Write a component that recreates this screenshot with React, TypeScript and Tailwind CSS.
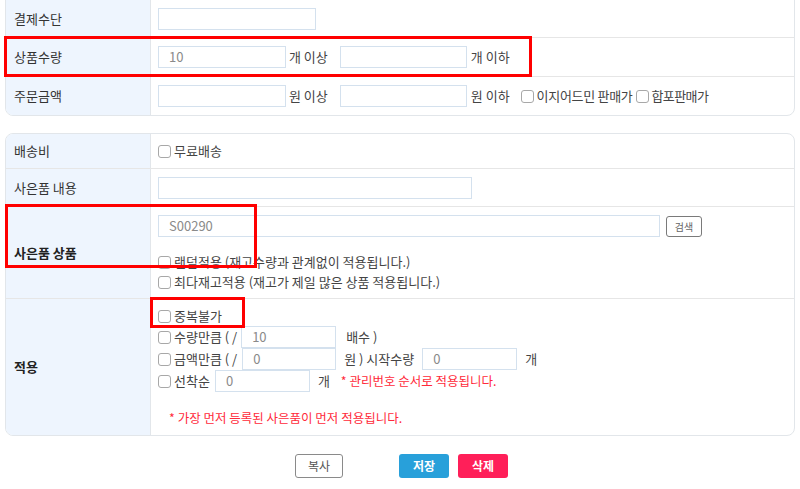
import React from "react";

const Cb = () => (
  <span className="inline-block w-[13px] h-[13px] border border-[#a8a8a8] rounded-[3px] bg-white mr-[3px] shrink-0" />
);

const Input = ({ w, value, cls = "" }: { w: string; value?: string; cls?: string }) => (
  <div className={`h-[22px] border border-[#d4e1ee] bg-white flex items-center pl-[10px] text-[13px] text-[#8a8a8a] shrink-0 ${w} ${cls}`}>
    {value}
  </div>
);

const Label = ({ children, bold }: { children: React.ReactNode; bold?: boolean }) => (
  <div
    className={`w-[145px] shrink-0 bg-[#eef5fe] border-r border-[#e2e6ea] flex items-center pl-[8px] ${
      bold ? "font-bold text-[#222]" : "text-[#333]"
    }`}
  >
    {children}
  </div>
);

export default function App() {
  return (
    <div className="relative w-[800px] h-[489px] bg-white overflow-hidden font-['Noto_Sans_CJK_KR','Noto_Sans',sans-serif] text-[13px] text-[#444]">
      {/* Card 1 */}
      <div className="mx-[5px] -mt-[1px] border border-[#e2e6ea] rounded-b-[8px] overflow-hidden">
        <div className="flex h-[37px]">
          <Label>결제수단</Label>
          <div className="flex-1 flex items-center pl-[7px]">
            <Input w="w-[158px]" />
          </div>
        </div>
        <div className="flex h-[39px] border-t border-[#e6e6e6]">
          <Label>상품수량</Label>
          <div className="flex-1 flex items-center pl-[7px]">
            <Input w="w-[128px]" value="10" />
            <span className="ml-[3px] mr-[12px]">개 이상</span>
            <Input w="w-[127px]" />
            <span className="ml-[4px]">개 이하</span>
          </div>
        </div>
        <div className="flex h-[39px] border-t border-[#e6e6e6]">
          <Label>주문금액</Label>
          <div className="flex-1 flex items-center pl-[7px]">
            <Input w="w-[128px]" />
            <span className="ml-[3px] mr-[12px]">원 이상</span>
            <Input w="w-[127px]" />
            <span className="ml-[4px] mr-[11px]">원 이하</span>
            <Cb />
            <span className="mr-[3px] tracking-[-0.3px]">이지어드민 판매가</span>
            <Cb />
            <span className="tracking-[-0.6px]">합포판매가</span>
          </div>
        </div>
      </div>

      {/* Card 2 */}
      <div className="mx-[5px] mt-[17px] border border-[#e2e6ea] rounded-[8px] overflow-hidden">
        <div className="flex h-[34px]">
          <Label>배송비</Label>
          <div className="flex-1 flex items-center pl-[7px]">
            <Cb />
            <span>무료배송</span>
          </div>
        </div>
        <div className="flex h-[38px] border-t border-[#e6e6e6]">
          <Label>사은품 내용</Label>
          <div className="flex-1 flex items-center pl-[7px]">
            <Input w="w-[314px]" />
          </div>
        </div>
        <div className="flex h-[92px] border-t border-[#e6e6e6]">
          <Label bold>사은품 상품</Label>
          <div className="flex-1 flex flex-col pl-[7px] pt-[8px]">
            <div className="flex items-center">
              <Input w="w-[502px]" value="S00290" />
              <button className="ml-[6px] w-[36px] h-[21px] border border-[#7a7a7a] rounded-[3px] bg-white text-[10px] text-[#666] flex items-center justify-center">
                검색
              </button>
            </div>
            <div className="mt-[15px] h-[20px] flex items-center">
              <Cb />
              <span>랜덤적용 (재고수량과 관계없이 적용됩니다.)</span>
            </div>
            <div className="h-[20px] flex items-center">
              <Cb />
              <span>최다재고적용 (재고가 제일 많은 상품 적용됩니다.)</span>
            </div>
          </div>
        </div>
        <div className="flex h-[137px] border-t border-[#e6e6e6]">
          <Label bold>적용</Label>
          <div className="flex-1 flex flex-col pl-[7px] pt-[7px]">
            <div className="h-[20px] flex items-center">
              <Cb />
              <span>중복불가</span>
            </div>
            <div className="h-[22px] flex items-center">
              <Cb />
              <span>수량만큼 ( /</span>
              <Input w="w-[95px]" value="10" cls="ml-[4px]" />
              <span className="ml-[10px]">배수 )</span>
            </div>
            <div className="h-[22px] flex items-center">
              <Cb />
              <span>금액만큼 ( /</span>
              <Input w="w-[94px]" value="0" cls="ml-[5px]" />
              <span className="ml-[8px]">원 ) 시작수량</span>
              <Input w="w-[95px]" value="0" cls="ml-[8px]" />
              <span className="ml-[8px]">개</span>
            </div>
            <div className="h-[22px] flex items-center">
              <Cb />
              <span>선착순</span>
              <Input w="w-[95px]" value="0" cls="ml-[5px]" />
              <span className="ml-[8px]">개</span>
              <span className="ml-[11px] text-[12.5px] text-[#ff2a3a]">* 관리번호 순서로 적용됩니다.</span>
            </div>
            <div className="mt-[16px] h-[20px] flex items-center pl-[11px] text-[12.5px] text-[#ff2a3a]">
              * 가장 먼저 등록된 사은품이 먼저 적용됩니다.
            </div>
          </div>
        </div>
      </div>

      {/* Buttons */}
      <div className="mt-[18px] flex justify-center pl-[3px]">
        <button className="w-[48px] h-[24px] border border-[#8a8a8a] rounded-[3px] bg-white text-[#555] text-[12px] mr-[56px]">
          복사
        </button>
        <button className="w-[50px] h-[24px] rounded-[3px] bg-[#28a0da] text-white text-[12px] font-bold mr-[9px]">
          저장
        </button>
        <button className="w-[50px] h-[24px] rounded-[3px] bg-[#ff1f59] text-white text-[12px] font-bold">
          삭제
        </button>
      </div>

      {/* Annotation boxes */}
      <div className="absolute left-[4px] top-[36px] w-[528px] h-[41px] border-[3px] border-[#ff0000] pointer-events-none" />
      <div className="absolute left-[5px] top-[204px] w-[252px] h-[64px] border-[3px] border-[#ff0000] pointer-events-none" />
      <div className="absolute left-[150px] top-[297px] w-[95px] h-[31px] border-[3px] border-[#ff0000] pointer-events-none" />
    </div>
  );
}
